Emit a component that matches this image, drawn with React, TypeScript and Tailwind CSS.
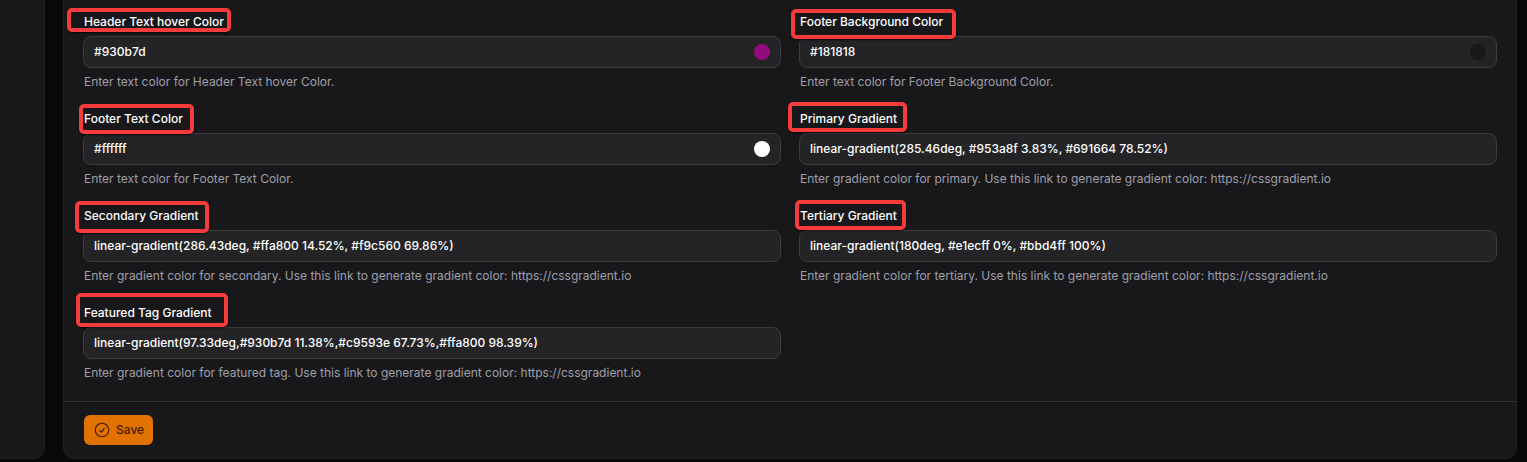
import React from 'react'

interface Field {
  id: string
  label: string
  value: string
  hint: string
  color?: string
  // outline drawn around the label
  mark: string
}

const gradientHint = (name: string) =>
  `Enter gradient color for ${name}. Use this link to generate gradient color: https://cssgradient.io`

const fields: Field[] = [
  {
    id: 'header-text-hover',
    label: 'Header Text hover Color',
    value: '#930b7d',
    hint: 'Enter text color for Header Text hover Color.',
    color: '#930b7d',
    mark: '-left-4 -top-1 w-[164px] h-6',
  },
  {
    id: 'footer-background',
    label: 'Footer Background Color',
    value: '#181818',
    hint: 'Enter text color for Footer Background Color.',
    color: '#181818',
    mark: '-left-2 -top-[3px] w-[165px] h-[30px]',
  },
  {
    id: 'footer-text',
    label: 'Footer Text Color',
    value: '#ffffff',
    hint: 'Enter text color for Footer Text Color.',
    color: '#ffffff',
    mark: '-left-1 -top-[5px] w-[115px] h-[30px]',
  },
  {
    id: 'primary-gradient',
    label: 'Primary Gradient',
    value: 'linear-gradient(285.46deg, #953a8f 3.83%, #691664 78.52%)',
    hint: gradientHint('primary'),
    mark: '-left-[11px] -top-[7px] w-[119px] h-[30px]',
  },
  {
    id: 'secondary-gradient',
    label: 'Secondary Gradient',
    value: 'linear-gradient(286.43deg, #ffa800 14.52%, #f9c560 69.86%)',
    hint: gradientHint('secondary'),
    mark: '-left-2 -top-[5px] w-[134px] h-8',
  },
  {
    id: 'tertiary-gradient',
    label: 'Tertiary Gradient',
    value: 'linear-gradient(180deg, #e1ecff 0%, #bbd4ff 100%)',
    hint: gradientHint('tertiary'),
    mark: '-left-1 -top-1.5 w-[111px] h-[30px]',
  },
  {
    id: 'featured-gradient',
    label: 'Featured Tag Gradient',
    value: 'linear-gradient(97.33deg,#930b7d 11.38%,#c9593e 67.73%,#ffa800 98.39%)',
    hint: gradientHint('featured tag'),
    mark: '-left-[7px] -top-[10px] w-[152px] h-[34px]',
  },
]

const ColorField: React.FC<{ field: Field }> = ({ field }) => {
  return (
    <div className="flex flex-col gap-1">
      <div className="relative flex">
        <label htmlFor={field.id} className="pl-px text-[12px] leading-5 font-medium text-white">
          {field.label}
        </label>
        <span
          className={`absolute z-10 rounded-[5px] border-4 border-[#f53b3b] shadow-[0_1px_2px_rgba(0,0,0,0.7)] pointer-events-none ${field.mark}`}
        />
      </div>
      <div className="flex items-center h-8 rounded-lg border border-[#3b3b3e] bg-[#242427] px-2.5">
        <input
          id={field.id}
          type="text"
          defaultValue={field.value}
          className="flex-1 min-w-0 bg-transparent text-[12px] leading-5 font-medium text-white outline-none"
        />
        {field.color && (
          <button
            type="button"
            aria-label={`Pick ${field.label}`}
            className="size-4 shrink-0 rounded-full"
            style={{ backgroundColor: field.color }}
          />
        )}
      </div>
      <p className="pl-px text-[12px] leading-5 text-[#9f9fa9]">{field.hint}</p>
    </div>
  )
}

export default function App() {
  return (
    <div className="flex gap-[18px] min-h-screen bg-[#09090b] pr-2.5 pb-[3px] font-['Inter',sans-serif]">
      <aside className="w-[45px] shrink-0 rounded-br-xl border-r border-b border-[#212124] bg-[#18181b]" />
      <form
        className="flex-1 min-w-0 rounded-b-xl border-x border-b border-[#212124] bg-[#18181b]"
        onSubmit={e => e.preventDefault()}
      >
        <div className="grid grid-cols-2 gap-x-[18px] gap-y-[17px] px-[19px] pt-3 pb-[18px]">
          {fields.map(field => (
            <ColorField key={field.id} field={field} />
          ))}
        </div>
        <div className="flex border-t border-[#303033] px-5 py-[13px]">
          <button
            type="submit"
            className="flex items-center gap-[5px] h-[30px] rounded-md bg-[#e17100] px-[9px] text-[12px] font-medium text-[#461901]"
          >
            <svg
              className="size-[18px]"
              viewBox="0 0 24 24"
              fill="none"
              stroke="currentColor"
              strokeWidth="1.5"
              strokeLinecap="round"
              strokeLinejoin="round"
            >
              <path d="M9 12.75 11.25 15 15 9.75M21 12a9 9 0 1 1-18 0 9 9 0 0 1 18 0Z" />
            </svg>
            Save
          </button>
        </div>
      </form>
    </div>
  )
}
